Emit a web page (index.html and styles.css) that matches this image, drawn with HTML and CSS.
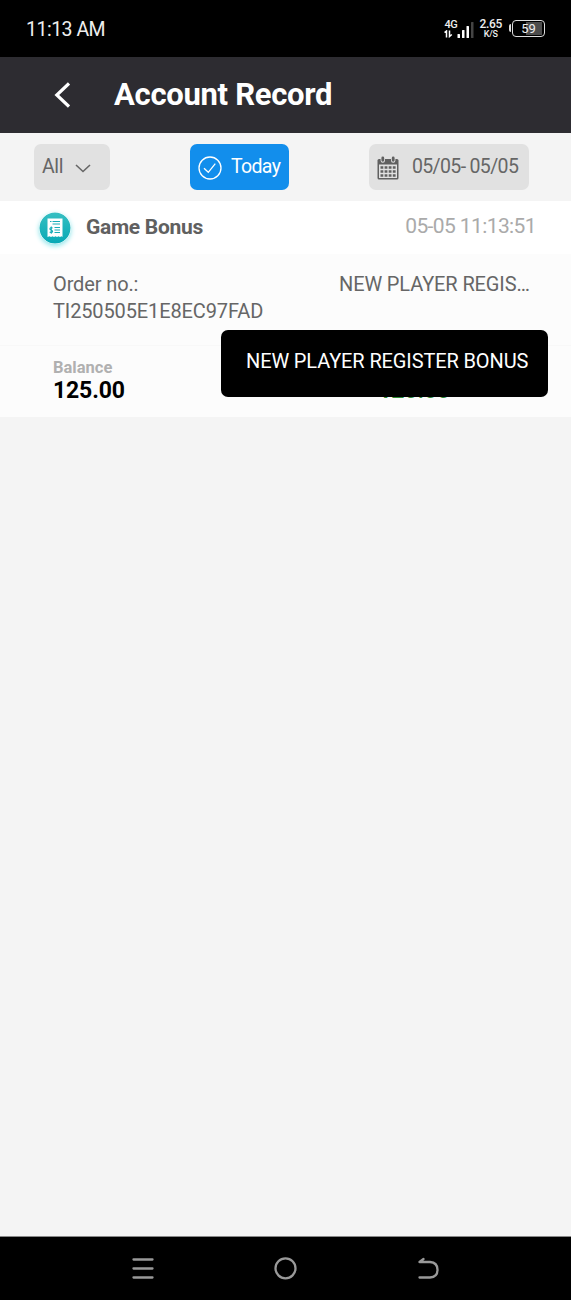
FILE: index.html
```
<!DOCTYPE html>
<html lang="en">
<head>
    <meta charset="UTF-8">
    <meta name="viewport" content="width=device-width, initial-scale=1.0">
    <title>Account Record</title>
    <link rel="stylesheet" href="styles.css">
</head>
<body>
    <div class="status-bar">
        <span class="clock">11:13 AM</span>
        <div class="status-icons">
            <div class="network">
                <span>4G</span>
                <svg width="9" height="8" viewBox="0 0 9 8" fill="none" stroke="#fff" stroke-width="1.5">
                    <path d="M0.5 2.5L2.500 1V7.500M5.500 0.500V6.500L7.800 4.500"/>
                </svg>
            </div>
            <svg class="signal" width="17" height="18" viewBox="0 0 17 18" fill="#fff">
                <rect x="0.5" y="13" width="2.5" height="4" rx="0.5"/>
                <rect x="5" y="9" width="2.5" height="8" rx="0.5"/>
                <rect x="9.5" y="5" width="2.5" height="12" rx="0.5"/>
                <rect x="14" y="1" width="2.5" height="16" rx="0.5" fill="#444"/>
            </svg>
            <div class="speed">
                <span>2.65</span>
                <span class="unit">K/S</span>
            </div>
            <div class="battery"><span>59</span></div>
        </div>
    </div>

    <header class="header">
        <svg class="back" width="16" height="26" viewBox="0 0 16 26" fill="none" stroke="#fff" stroke-width="3.2">
            <path d="M15 1.500L2.800 13L15 24.500"/>
        </svg>
        <h1>Account Record</h1>
    </header>

    <div class="filters">
        <button class="filter all">All
            <svg width="16" height="9" viewBox="0 0 16 9" fill="none" stroke="#666" stroke-width="1.6">
                <path d="M1 1L8 7.5L15 1"/>
            </svg>
        </button>
        <button class="filter today">
            <svg width="24" height="24" viewBox="0 0 24 24" fill="none" stroke="#fff" stroke-width="1.3">
                <circle cx="12" cy="12" r="11"/>
                <path d="M6 12.3L10.3 16.3L17.3 7.7"/>
            </svg>
            Today
        </button>
        <button class="filter dates">
            <svg width="22" height="24" viewBox="0 0 22 24">
                <path fill="#606060" d="M2 3H20Q21.500 3 21.500 4.500V22Q21.500 23.500 20 23.500H2Q0.500 23.500 0.500 22V4.500Q0.500 3 2 3Z"/>
                <path fill="#e1e1e1" d="M2 8.500H20V22H2Z"/>
                <path fill="none" stroke="#e1e1e1" stroke-width="4.400" stroke-linecap="round" d="M5.800 2.500V4.500M16.200 2.500V4.500"/>
                <path fill="none" stroke="#606060" stroke-width="2.800" stroke-linecap="round" d="M5.800 2V4.300M16.200 2V4.300"/>
                <path stroke="#606060" stroke-width="2.6" stroke-dasharray="2.800 1.300" d="M3.500 11.500H18.700M3.500 15.500H18.700M3.500 19.500H18.700"/>
            </svg>
            05/05- 05/05
        </button>
    </div>

    <main class="record">
        <div class="record-head">
            <svg class="bonus-icon" width="32" height="32" viewBox="0 0 32 32">
                <defs>
                    <linearGradient id="teal" x1="0" y1="0" x2="0" y2="1">
                        <stop offset="0" stop-color="#35bfc2"/>
                        <stop offset="1" stop-color="#08a9b5"/>
                    </linearGradient>
                </defs>
                <circle cx="16" cy="16" r="15.500" fill="url(#teal)"/>
                <path fill="#fff" d="M8.500 6.500H23.500V25L22.500 24.300L21 25L19.500 24.300L18 25L16.500 24.300L15 25L13.500 24.300L12 25L10.500 24.300L8.500 25Z"/>
                <g fill="none" stroke="#18adb7" stroke-width="1.100">
                    <path d="M11 9.500H12.500M13.500 9.500H21M13.500 12H21M15.500 15.500H21M15.500 18H21M15.500 20.500H21"/>
                    <path d="M13.600 16Q10.800 15 10.900 17Q11.200 18 12.500 18.200Q13.800 18.500 13.600 20Q12.500 21.200 10.700 20M12.300 14.500V21.800"/>
                </g>
            </svg>
            <h2>Game Bonus</h2>
            <time>05-05 11:13:51</time>
        </div>
        <div class="record-info">
            <p class="order">Order no.:<br>TI250505E1E8EC97FAD</p>
            <div class="remark">
                <p>NEW PLAYER REGIS…</p>
                <div class="tooltip">NEW PLAYER REGISTER BONUS</div>
            </div>
        </div>
        <div class="record-amounts">
            <div class="amount">
                <span>Balance</span>
                <strong>125.00</strong>
            </div>
            <strong class="income">125.00</strong>
        </div>
    </main>

    <nav class="nav-bar">
        <svg width="24" height="24" viewBox="0 0 24 24" fill="none" stroke="#999" stroke-width="2.300" stroke-linecap="round">
            <path d="M2.500 2.500H21.500M2.500 11.500H21.500M2.500 20.500H21.500"/>
        </svg>
        <svg width="24" height="24" viewBox="0 0 24 24" fill="none" stroke="#999" stroke-width="2.300">
            <circle cx="11.500" cy="11.300" r="10"/>
        </svg>
        <svg width="24" height="24" viewBox="0 0 24 24" fill="none" stroke="#999" stroke-width="2.300" stroke-linecap="round" stroke-linejoin="round">
            <path d="M7.500 2L3.500 5H14Q21.500 5.500 21.500 12.800T14 20.500H3.500"/>
        </svg>
    </nav>
</body>
</html>
```

FILE: styles.css
```
* {
    box-sizing: border-box;
}
body {
    margin: 0;
    height: 1300px;
    display: flex;
    flex-direction: column;
    background: #f4f4f4;
    color: #666;
    font-family: Roboto, sans-serif;
    font-size: 20px;
}
h1, h2, p {
    margin: 0;
}
svg {
    display: block;
    flex: none;
}
.status-bar {
    height: 57px;
    padding: 0 26px;
    display: flex;
    align-items: center;
    justify-content: space-between;
    background: #000;
    color: #eee;
}
.clock {
    padding-top: 2px;
    font-size: 19.5px;
    letter-spacing: -0.5px;
}
.status-icons {
    display: flex;
    align-items: center;
}
.network, .speed {
    display: flex;
    flex-direction: column;
    font-size: 11px;
    font-weight: 500;
    line-height: 10px;
}
.network {
    width: 13px;
}
.network span {
    letter-spacing: -0.4px;
}
.signal {
    margin: 3px 5px 0 0;
}
.speed {
    align-items: center;
    margin-right: 10px;
    font-size: 12px;
    letter-spacing: -0.3px;
}
.speed span {
    line-height: 11px;
}
.speed .unit {
    font-size: 9px;
    line-height: 8px;
}
.battery {
    position: relative;
    width: 33px;
    height: 17px;
    padding: 1px 2px;
    border: 1.5px solid #ddd;
    border-radius: 4px;
}
.battery::before {
    content: "";
    position: absolute;
    left: -4px;
    top: 3px;
    width: 2px;
    height: 8px;
    border-radius: 2px 0 0 2px;
    background: #ddd;
}
.battery span {
    display: block;
    height: 100%;
    background: linear-gradient(to left, #4c4c4c 60%, transparent 60%);
    font-size: 13px;
    line-height: 14px;
    text-align: center;
}
.header {
    height: 76px;
    padding-left: 54px;
    display: flex;
    align-items: center;
    background: #2d2c31;
    color: #fff;
}
.back {
    margin-bottom: 1px;
}
.header h1 {
    margin-left: 44px;
    padding-bottom: 2px;
    font-size: 31px;
    font-weight: 700;
    letter-spacing: -0.3px;
}
.filters {
    height: 68px;
    padding: 0 42px 0 34px;
    display: flex;
    align-items: center;
    justify-content: space-between;
}
.filter {
    height: 46px;
    padding: 0 8px 1px;
    display: flex;
    align-items: center;
    border: none;
    border-radius: 7px;
    background: #e1e1e1;
    color: #666;
    font: inherit;
    font-size: 19.5px;
    letter-spacing: -0.65px;
    white-space: nowrap;
}
.all {
    width: 76px;
    gap: 12px;
    letter-spacing: -0.4px;
}
.all svg {
    margin-top: 4px;
}
.today {
    width: 99px;
    gap: 9px;
    background: #128eec;
    color: #fff;
}
.today svg, .dates svg {
    margin-top: 2px;
}
.dates {
    width: 160px;
    gap: 13px;
}
.record {
    height: 216px;
    background: #fcfcfc;
}
.record-head {
    height: 53px;
    padding: 0 35px 0 39px;
    display: flex;
    align-items: center;
    background: #fff;
}
.bonus-icon {
    border-radius: 50%;
    box-shadow: 0 2px 5px #8ee5ea;
}
.record-head h2 {
    margin-left: 15px;
    padding-bottom: 2px;
    font-size: 21px;
    font-weight: 700;
    letter-spacing: -0.3px;
    color: #606060;
}
.record-head time {
    margin-left: auto;
    padding-bottom: 3px;
    font-size: 21px;
    letter-spacing: -0.6px;
    color: #aaa;
}
.record-info {
    height: 92px;
    padding: 17px 41px 0 53px;
    display: flex;
    justify-content: space-between;
    border-bottom: 1px solid #f8f8f8;
    line-height: 27px;
    letter-spacing: -0.12px;
}
.remark {
    position: relative;
    width: 191px;
}
.remark p {
    white-space: nowrap;
}
.tooltip {
    position: absolute;
    top: 59px;
    right: -18px;
    width: 327px;
    height: 67px;
    padding-left: 25px;
    border-radius: 7px;
    background: #000;
    color: #fff;
    line-height: 63px;
    white-space: nowrap;
}
.record-amounts {
    height: 71px;
    padding: 12px 121px 0 53px;
    display: flex;
    justify-content: space-between;
    align-items: flex-start;
}
.amount span {
    display: block;
    font-size: 16.5px;
    font-weight: 700;
    line-height: 20px;
    color: #b0b0b0;
}
.record-amounts strong {
    display: block;
    font-size: 23px;
    line-height: 26px;
    letter-spacing: -0.15px;
    color: #000;
}
.record-amounts .income {
    margin-top: 20px;
    color: #2c8a35;
}
.nav-bar {
    height: 64px;
    margin-top: auto;
    padding: 0 131px;
    display: flex;
    align-items: center;
    justify-content: space-between;
    border-top: 1px solid #888;
    background: #000;
}
```
